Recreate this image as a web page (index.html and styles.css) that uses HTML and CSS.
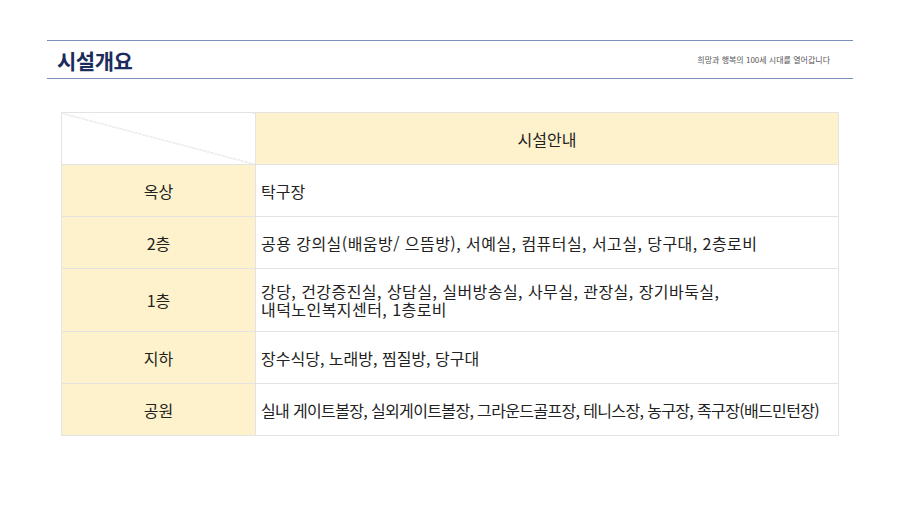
FILE: index.html
```html
<!DOCTYPE html>
<html lang="ko">
<head>
<meta charset="utf-8">
<link rel="stylesheet" href="styles.css">
</head>
<body>
<div class="wrap">
  <header class="head">
    <h1 class="title">시설개요</h1>
    <p class="slogan">희망과 행복의 100세 시대를 열어갑니다</p>
  </header>
  <table class="tbl">
    <tr>
      <td class="corner"></td>
      <td class="hd">시설안내</td>
    </tr>
    <tr><td class="lab">옥상</td><td class="val">탁구장</td></tr>
    <tr><td class="lab">2층</td><td class="val wide">공용 강의실(배움방/ 으뜸방), 서예실, 컴퓨터실, 서고실, 당구대, 2층로비</td></tr>
    <tr><td class="lab">1층</td><td class="val wide">강당, 건강증진실, 상담실, 실버방송실, 사무실, 관장실, 장기바둑실,<br>내덕노인복지센터, 1층로비</td></tr>
    <tr><td class="lab">지하</td><td class="val">장수식당, 노래방, 찜질방, 당구대</td></tr>
    <tr><td class="lab">공원</td><td class="val tight">실내 게이트볼장, 실외게이트볼장, 그라운드골프장, 테니스장, 농구장, 족구장(배드민턴장)</td></tr>
  </table>
</div>
</body>
</html>
```
FILE: styles.css
```css
html, body { margin: 0; padding: 0; background: #fff; }
body { font-family: "Noto Sans CJK KR", "Noto Sans", sans-serif; color: #222; }
.wrap { width: 806px; margin: 40px auto 0; }
.head {
  display: flex; align-items: center; justify-content: space-between;
  height: 37px; border-top: 1px solid #7b8fba; border-bottom: 1px solid #7b8fba;
  padding: 0 23px 0 10px;
}
.title { margin: 0; font-size: 21px; font-weight: 700; color: #1b2d5c; letter-spacing: -0.5px; }
.slogan { margin: 0; font-size: 8px; color: #555; }
.tbl {
  width: 778px; margin: 33px auto 0; border-collapse: collapse;
  font-size: 16px; line-height: 18px;
}
.tbl td { border: 1px solid #e3e3e3; box-sizing: border-box; height: 52px; padding: 13px 5px; }
.corner {
  width: 194px; background: linear-gradient(to top right, transparent calc(50% - 0.6px), #d4d4d4, transparent calc(50% + 0.6px));
}
.hd { background: #fef2cc; text-align: center; border-color: #fef2cc; }
.lab { background: #fef2cc; text-align: center; border-color: #f6f0e4 #e3e3e3 #f6f0e4 #fef2cc; }
.val { text-align: left; }
.wide { letter-spacing: 0.45px; }
.tight { letter-spacing: -0.65px; padding-right: 2px; white-space: nowrap; }
```
